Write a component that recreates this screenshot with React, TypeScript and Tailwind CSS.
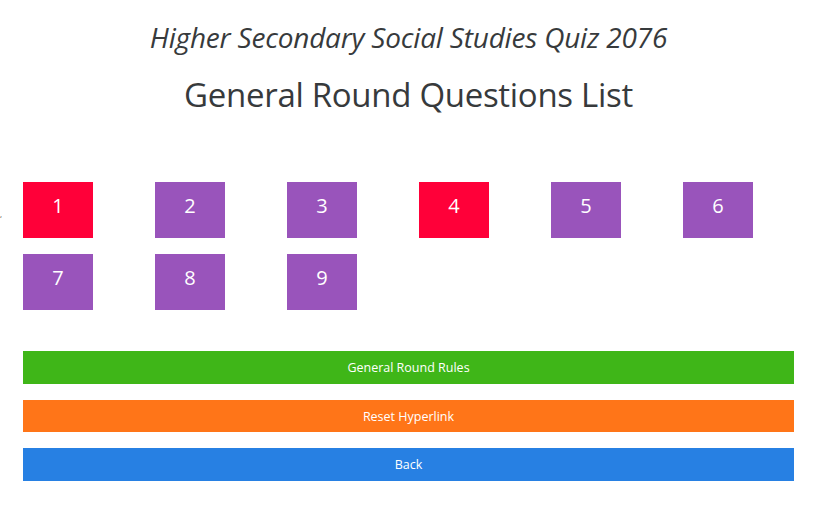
const QUESTIONS = [
  { n: 1, done: true },
  { n: 2, done: false },
  { n: 3, done: false },
  { n: 4, done: true },
  { n: 5, done: false },
  { n: 6, done: false },
  { n: 7, done: false },
  { n: 8, done: false },
  { n: 9, done: false },
]

const font = { fontFamily: '"Segoe UI", "Open Sans", "Noto Sans", sans-serif' }

export default function App() {
  return (
    <div className="relative min-h-[512px] bg-white text-[#373a3c]" style={font}>
      <span className="absolute left-0 top-[210px] text-[8px] leading-none text-[#373a3c]">,</span>

      <div className="ml-[23px] w-[771px] pt-[18px]">
        <h3 className="text-center text-[28px] italic leading-[38px] tracking-[-0.2px]">
          Higher Secondary Social Studies Quiz 2076
        </h3>
        <h1 className="mt-[17px] text-center text-[33px] leading-[44px] tracking-[-0.3px]">
          General Round Questions List
        </h1>

        <div className="mt-[65px] grid grid-cols-[repeat(6,70px)] gap-x-[62px] gap-y-[16px]">
          {QUESTIONS.map((q) => (
            <button
              key={q.n}
              className={`flex h-[56px] w-[70px] items-center justify-center pb-[8px] text-[20px] text-white ${
                q.done ? 'bg-[#ff0039]' : 'bg-[#9954bb]'
              }`}
            >
              {q.n}
            </button>
          ))}
        </div>

        <div className="mt-[41px] flex flex-col gap-[16px] text-[12.5px] text-white">
          <button className="h-[33px] bg-[#3fb618] pt-[2px]">General Round Rules</button>
          <button className="h-[32px] bg-[#ff7518] pt-[2px]">Reset Hyperlink</button>
          <button className="h-[33px] bg-[#2780e3] pt-[2px]">Back</button>
        </div>
      </div>
    </div>
  )
}
